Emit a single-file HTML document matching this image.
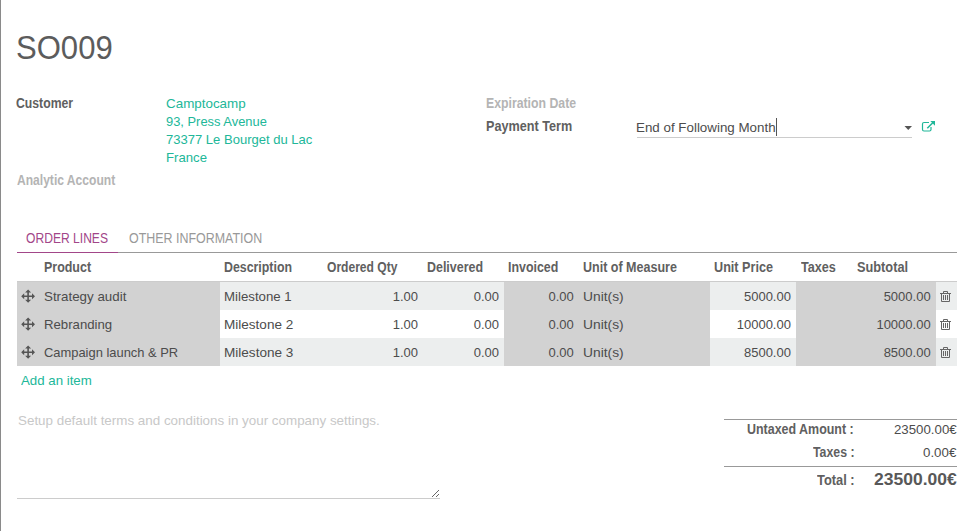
<!DOCTYPE html>
<html><head><meta charset="utf-8">
<style>
html,body{margin:0;padding:0;}
body{width:972px;height:531px;overflow:hidden;background:#fff;position:relative;font-family:"Liberation Sans",sans-serif;font-size:13px;color:#4c4c4c;}
.a{position:absolute;white-space:nowrap;transform-origin:0 0;}
.g{position:absolute;}
</style></head><body>
<div class="g" style="left:0;top:0;width:1px;height:531px;background:#8a8a8a"></div>
<div class="g" style="left:776px;top:118px;width:1px;height:18px;background:#555"></div>
<div class="g" style="left:637px;top:137px;width:275px;height:1px;background:#cccccc"></div>
<svg class="g" style="left:900px;top:118px" width="40" height="20" viewBox="900 118 40 20">
 <path d="M904.5 126 L912 126 L908.25 130 Z" fill="#555"/>
 <path d="M929 122.5 H924 Q922.5 122.5 922.5 124 V129.5 Q922.5 131 924 131 H929.5 Q931 131 931 129.5 V127" fill="none" stroke="#21b799" stroke-width="1.2"/>
 <path d="M927.3 128.2 L933 122.5" fill="none" stroke="#21b799" stroke-width="1.5"/>
 <path d="M930.3 121 H935 V125.7 Z" fill="#21b799"/>
</svg>
<div class="g" style="left:17px;top:252px;width:940px;height:1px;background:#999"></div>
<div class="g" style="left:17px;top:252px;width:101px;height:1px;background:#a24689"></div>
<div class="g" style="left:17px;top:281px;width:940px;height:1px;background:#cccccc"></div>
<div class="g" style="left:17px;top:282px;width:940px;height:28px;background:#eceeee"></div>
<div class="g" style="left:17px;top:338px;width:940px;height:28px;background:#eceeee"></div>
<div class="g" style="left:17px;top:282px;width:203px;height:84px;background:#d2d2d2"></div>
<div class="g" style="left:504px;top:282px;width:206px;height:84px;background:#d2d2d2"></div>
<div class="g" style="left:796px;top:282px;width:140px;height:84px;background:#d2d2d2"></div>
<div class="g" style="left:17px;top:498px;width:423px;height:1px;background:#cccccc"></div>
<svg class="g" style="left:428px;top:486px" width="14" height="14" viewBox="428 486 14 14" fill="#666" shape-rendering="crispEdges"><rect x="432" y="496" width="1" height="1"/><rect x="433" y="495" width="1" height="1"/><rect x="434" y="494" width="1" height="1"/><rect x="435" y="493" width="1" height="1"/><rect x="436" y="492" width="1" height="1"/><rect x="437" y="491" width="1" height="1"/><rect x="438" y="490" width="1" height="1"/><rect x="436" y="496" width="1" height="1"/><rect x="437" y="495" width="1" height="1"/><rect x="438" y="494" width="1" height="1"/></svg>
<div class="g" style="left:724px;top:419px;width:233px;height:1px;background:#999"></div>
<div class="g" style="left:724px;top:466px;width:233px;height:1px;background:#999"></div>

<svg class="g" style="left:18px;top:286px" width="22" height="20" viewBox="18 286 22 20">
 <path d="M23.2 296.2 H33 M28.1 291.6 V301" stroke="#555" stroke-width="1.6" fill="none"/>
 <path d="M21.2 296.2 L24.2 293.2 V299.2 Z M35 296.2 L32 293.2 V299.2 Z M28.1 289.6 L25.1 292.6 H31.1 Z M28.1 302.8 L25.1 299.8 H31.1 Z" fill="#555"/>
</svg>
<svg class="g" style="left:936px;top:286px" width="20" height="20" viewBox="936 286 20 20">
 <path d="M940 293.5 H951 M943.5 293 V291.5 H947.5 V293 M941.5 293.5 V301.5 H949.5 V293.5 M943.5 295 V300 M945.5 295 V300 M947.5 295 V300" stroke="#666" stroke-width="1" fill="none"/>
</svg>
<svg class="g" style="left:18px;top:314px" width="22" height="20" viewBox="18 286 22 20">
 <path d="M23.2 296.2 H33 M28.1 291.6 V301" stroke="#555" stroke-width="1.6" fill="none"/>
 <path d="M21.2 296.2 L24.2 293.2 V299.2 Z M35 296.2 L32 293.2 V299.2 Z M28.1 289.6 L25.1 292.6 H31.1 Z M28.1 302.8 L25.1 299.8 H31.1 Z" fill="#555"/>
</svg>
<svg class="g" style="left:936px;top:314px" width="20" height="20" viewBox="936 286 20 20">
 <path d="M940 293.5 H951 M943.5 293 V291.5 H947.5 V293 M941.5 293.5 V301.5 H949.5 V293.5 M943.5 295 V300 M945.5 295 V300 M947.5 295 V300" stroke="#666" stroke-width="1" fill="none"/>
</svg>
<svg class="g" style="left:18px;top:342px" width="22" height="20" viewBox="18 286 22 20">
 <path d="M23.2 296.2 H33 M28.1 291.6 V301" stroke="#555" stroke-width="1.6" fill="none"/>
 <path d="M21.2 296.2 L24.2 293.2 V299.2 Z M35 296.2 L32 293.2 V299.2 Z M28.1 289.6 L25.1 292.6 H31.1 Z M28.1 302.8 L25.1 299.8 H31.1 Z" fill="#555"/>
</svg>
<svg class="g" style="left:936px;top:342px" width="20" height="20" viewBox="936 286 20 20">
 <path d="M940 293.5 H951 M943.5 293 V291.5 H947.5 V293 M941.5 293.5 V301.5 H949.5 V293.5 M943.5 295 V300 M945.5 295 V300 M947.5 295 V300" stroke="#666" stroke-width="1" fill="none"/>
</svg>

<div class="a" style="left:15.74px;top:31px;font-size:33px;line-height:33px;color:#5c5c5c;transform:scaleX(0.9411);">SO009</div>
<div class="a" style="left:15.85px;top:96px;font-size:14px;line-height:14px;color:#606060;font-weight:bold;transform:scaleX(0.8733);">Customer</div>
<div class="a" style="left:165.86px;top:97px;font-size:13px;line-height:13px;color:#21b799;transform:scaleX(1.0307);">Camptocamp</div>
<div class="a" style="left:165.69px;top:115px;font-size:13px;line-height:13px;color:#21b799;transform:scaleX(0.9917);">93, Press Avenue</div>
<div class="a" style="left:165.86px;top:133px;font-size:13px;line-height:13px;color:#21b799;transform:scaleX(1.0025);">73377 Le Bourget du Lac</div>
<div class="a" style="left:165.53px;top:151px;font-size:13px;line-height:13px;color:#21b799;transform:scaleX(1.0120);">France</div>
<div class="a" style="left:16.69px;top:173px;font-size:14px;line-height:14px;color:#b4b4b4;font-weight:bold;transform:scaleX(0.8622);">Analytic Account</div>
<div class="a" style="left:486.05px;top:96px;font-size:14px;line-height:14px;color:#b4b4b4;font-weight:bold;transform:scaleX(0.8769);">Expiration Date</div>
<div class="a" style="left:485.98px;top:119px;font-size:14px;line-height:14px;color:#606060;font-weight:bold;transform:scaleX(0.9025);">Payment Term</div>
<div class="a" style="left:635.76px;top:121px;font-size:13px;line-height:13px;color:#4c4c4c;transform:scaleX(1.0277);">End of Following Month</div>
<div class="a" style="left:25.52px;top:231px;font-size:14px;line-height:14px;color:#a24689;transform:scaleX(0.8640);">ORDER LINES</div>
<div class="a" style="left:128.83px;top:231px;font-size:14px;line-height:14px;color:#999999;transform:scaleX(0.8891);">OTHER INFORMATION</div>
<div class="a" style="left:43.53px;top:260px;font-size:14px;line-height:14px;color:#606060;font-weight:bold;transform:scaleX(0.8895);">Product</div>
<div class="a" style="left:223.72px;top:260px;font-size:14px;line-height:14px;color:#606060;font-weight:bold;transform:scaleX(0.8826);">Description</div>
<div class="a" style="left:326.50px;top:260px;font-size:14px;line-height:14px;color:#606060;font-weight:bold;transform:scaleX(0.8620);">Ordered Qty</div>
<div class="a" style="left:426.72px;top:260px;font-size:14px;line-height:14px;color:#606060;font-weight:bold;transform:scaleX(0.8888);">Delivered</div>
<div class="a" style="left:507.96px;top:260px;font-size:14px;line-height:14px;color:#606060;font-weight:bold;transform:scaleX(0.8844);">Invoiced</div>
<div class="a" style="left:583.04px;top:260px;font-size:14px;line-height:14px;color:#606060;font-weight:bold;transform:scaleX(0.8943);">Unit of Measure</div>
<div class="a" style="left:713.54px;top:260px;font-size:14px;line-height:14px;color:#606060;font-weight:bold;transform:scaleX(0.9028);">Unit Price</div>
<div class="a" style="left:800.80px;top:260px;font-size:14px;line-height:14px;color:#606060;font-weight:bold;transform:scaleX(0.9021);">Taxes</div>
<div class="a" style="left:856.50px;top:260px;font-size:14px;line-height:14px;color:#606060;font-weight:bold;transform:scaleX(0.9115);">Subtotal</div>
<div class="a" style="left:21.49px;top:374px;font-size:13px;line-height:13px;color:#21b799;transform:scaleX(1.0206);">Add an item</div>
<div class="a" style="left:17.87px;top:414px;font-size:13px;line-height:13px;color:#c8c8c8;transform:scaleX(1.0301);">Setup default terms and conditions in your company settings.</div>
<div class="a" style="left:747.30px;top:422px;font-size:14px;line-height:14px;color:#606060;font-weight:bold;transform:scaleX(0.8888);">Untaxed Amount :</div>
<div class="a" style="left:893.96px;top:423px;font-size:13px;line-height:13px;color:#4c4c4c;transform:scaleX(1.0191);">23500.00€</div>
<div class="a" style="left:812.94px;top:445px;font-size:14px;line-height:14px;color:#606060;font-weight:bold;transform:scaleX(0.8789);">Taxes :</div>
<div class="a" style="left:923.41px;top:446px;font-size:13px;line-height:13px;color:#4c4c4c;transform:scaleX(1.0227);">0.00€</div>
<div class="a" style="left:816.61px;top:473px;font-size:14px;line-height:14px;color:#606060;font-weight:bold;transform:scaleX(0.9184);">Total :</div>
<div class="a" style="left:873.94px;top:471px;font-size:17px;line-height:17px;color:#585858;font-weight:bold;transform:scaleX(1.0292);">23500.00€</div>
<div class="a" style="left:44.49px;top:290px;font-size:13px;line-height:13px;color:#4c4c4c;transform:scaleX(1.0267);">Strategy audit</div>
<div class="a" style="left:224.04px;top:290px;font-size:13px;line-height:13px;color:#4c4c4c;transform:scaleX(1.0182);">Milestone 1</div>
<div class="a" style="left:392.76px;top:290px;font-size:13px;line-height:13px;color:#4c4c4c;">1.00</div>
<div class="a" style="left:473.76px;top:290px;font-size:13px;line-height:13px;color:#4c4c4c;">0.00</div>
<div class="a" style="left:548.42px;top:290px;font-size:13px;line-height:13px;color:#4c4c4c;">0.00</div>
<div class="a" style="left:582.51px;top:290px;font-size:13px;line-height:13px;color:#4c4c4c;transform:scaleX(1.0624);">Unit(s)</div>
<div class="a" style="left:743.96px;top:290px;font-size:13px;line-height:13px;color:#4c4c4c;">5000.00</div>
<div class="a" style="left:883.63px;top:290px;font-size:13px;line-height:13px;color:#4c4c4c;">5000.00</div>
<div class="a" style="left:44.39px;top:318px;font-size:13px;line-height:13px;color:#4c4c4c;transform:scaleX(1.0136);">Rebranding</div>
<div class="a" style="left:224.02px;top:318px;font-size:13px;line-height:13px;color:#4c4c4c;transform:scaleX(1.0414);">Milestone 2</div>
<div class="a" style="left:392.76px;top:318px;font-size:13px;line-height:13px;color:#4c4c4c;">1.00</div>
<div class="a" style="left:473.76px;top:318px;font-size:13px;line-height:13px;color:#4c4c4c;">0.00</div>
<div class="a" style="left:548.42px;top:318px;font-size:13px;line-height:13px;color:#4c4c4c;">0.00</div>
<div class="a" style="left:582.51px;top:318px;font-size:13px;line-height:13px;color:#4c4c4c;transform:scaleX(1.0624);">Unit(s)</div>
<div class="a" style="left:736.73px;top:318px;font-size:13px;line-height:13px;color:#4c4c4c;">10000.00</div>
<div class="a" style="left:876.42px;top:318px;font-size:13px;line-height:13px;color:#4c4c4c;">10000.00</div>
<div class="a" style="left:44.19px;top:346px;font-size:13px;line-height:13px;color:#4c4c4c;transform:scaleX(0.9928);">Campaign launch &amp; PR</div>
<div class="a" style="left:224.02px;top:346px;font-size:13px;line-height:13px;color:#4c4c4c;transform:scaleX(1.0430);">Milestone 3</div>
<div class="a" style="left:392.76px;top:346px;font-size:13px;line-height:13px;color:#4c4c4c;">1.00</div>
<div class="a" style="left:473.76px;top:346px;font-size:13px;line-height:13px;color:#4c4c4c;">0.00</div>
<div class="a" style="left:548.42px;top:346px;font-size:13px;line-height:13px;color:#4c4c4c;">0.00</div>
<div class="a" style="left:582.51px;top:346px;font-size:13px;line-height:13px;color:#4c4c4c;transform:scaleX(1.0624);">Unit(s)</div>
<div class="a" style="left:743.96px;top:346px;font-size:13px;line-height:13px;color:#4c4c4c;">8500.00</div>
<div class="a" style="left:883.63px;top:346px;font-size:13px;line-height:13px;color:#4c4c4c;">8500.00</div>
</body></html>
